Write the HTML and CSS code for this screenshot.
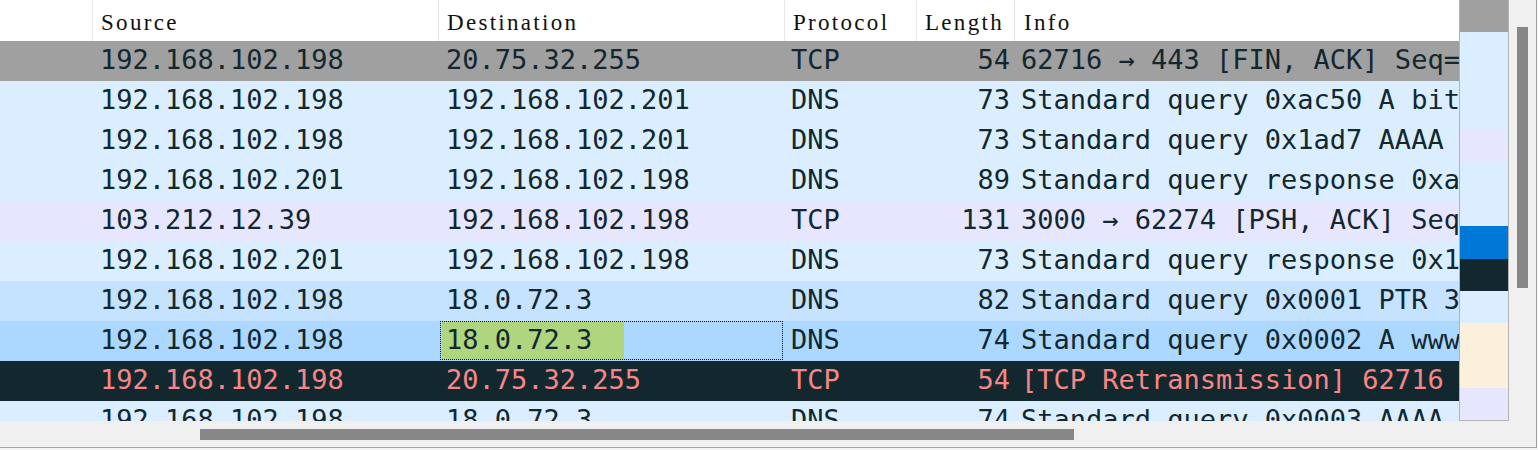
FILE: index.html
```html
<!DOCTYPE html>
<html>
<head>
<meta charset="utf-8">
<link rel="stylesheet" href="styles.css">
</head>
<body>
<div class="frame">
  <div class="top">
    <div class="table">
      <div class="row head">
        <div class="c c0"></div>
        <div class="c c1">Source</div>
        <div class="c c2">Destination</div>
        <div class="c c3">Protocol</div>
        <div class="c c4">Length</div>
        <div class="c c5">Info</div>
      </div>
      <div class="row data fin">
        <div class="c c0"></div><div class="c c1">192.168.102.198</div><div class="c c2">20.75.32.255</div><div class="c c3">TCP</div><div class="c c4">54</div><div class="c c5">62716 → 443 [FIN, ACK] Seq=1 Ack=1 Win=513 Len=0</div>
      </div>
      <div class="row data udp">
        <div class="c c0"></div><div class="c c1">192.168.102.198</div><div class="c c2">192.168.102.201</div><div class="c c3">DNS</div><div class="c c4">73</div><div class="c c5">Standard query 0xac50 A bit.ly</div>
      </div>
      <div class="row data udp">
        <div class="c c0"></div><div class="c c1">192.168.102.198</div><div class="c c2">192.168.102.201</div><div class="c c3">DNS</div><div class="c c4">73</div><div class="c c5">Standard query 0x1ad7 AAAA bit.ly</div>
      </div>
      <div class="row data udp">
        <div class="c c0"></div><div class="c c1">192.168.102.201</div><div class="c c2">192.168.102.198</div><div class="c c3">DNS</div><div class="c c4">89</div><div class="c c5">Standard query response 0xac50 A bit.ly</div>
      </div>
      <div class="row data tcp">
        <div class="c c0"></div><div class="c c1">103.212.12.39</div><div class="c c2">192.168.102.198</div><div class="c c3">TCP</div><div class="c c4">131</div><div class="c c5">3000 → 62274 [PSH, ACK] Seq=1 Ack=1 Win=501 Len=77</div>
      </div>
      <div class="row data udp">
        <div class="c c0"></div><div class="c c1">192.168.102.201</div><div class="c c2">192.168.102.198</div><div class="c c3">DNS</div><div class="c c4">73</div><div class="c c5">Standard query response 0x1ad7 AAAA bit.ly</div>
      </div>
      <div class="row data hover">
        <div class="c c0"></div><div class="c c1">192.168.102.198</div><div class="c c2">18.0.72.3</div><div class="c c3">DNS</div><div class="c c4">82</div><div class="c c5">Standard query 0x0001 PTR 3.72.0.18.in-addr.arpa</div>
      </div>
      <div class="row data sel">
        <div class="c c0"></div><div class="c c1">192.168.102.198</div><div class="c c2 focus"><span class="hit">18.0.72.3</span></div><div class="c c3">DNS</div><div class="c c4">74</div><div class="c c5">Standard query 0x0002 A www.example.com</div>
      </div>
      <div class="row data bad">
        <div class="c c0"></div><div class="c c1">192.168.102.198</div><div class="c c2">20.75.32.255</div><div class="c c3">TCP</div><div class="c c4">54</div><div class="c c5">[TCP Retransmission] 62716 → 443 [FIN, ACK]</div>
      </div>
      <div class="row data udp">
        <div class="c c0"></div><div class="c c1">192.168.102.198</div><div class="c c2">18.0.72.3</div><div class="c c3">DNS</div><div class="c c4">74</div><div class="c c5">Standard query 0x0003 AAAA www.example.com</div>
      </div>
    </div>
    <div class="minimap">
      <div class="m gray"></div>
      <div class="m lb"></div>
      <div class="m lb"></div>
      <div class="m lb"></div>
      <div class="m lav"></div>
      <div class="m lb"></div>
      <div class="m lb"></div>
      <div class="m blue"></div>
      <div class="m dark"></div>
      <div class="m lb"></div>
      <div class="m beige"></div>
      <div class="m beige"></div>
      <div class="m lav"></div>
    </div>
    <div class="vscroll"><div class="vthumb"></div></div>
  </div>
  <div class="hscroll"><div class="hthumb"></div></div>
</div>
</body>
</html>
```
FILE: styles.css
```css
html, body {
  margin: 0;
  padding: 0;
}
body {
  background: #f4f4f4;
  width: 1538px;
  height: 450px;
  overflow: hidden;
}
.frame {
  width: 1536px;
  height: 447px;
  border-right: 1px solid #a3a3a3;
  border-bottom: 1px solid #a3a3a3;
  display: flex;
  flex-direction: column;
  background: #f0f0f0;
}
.top {
  display: flex;
  height: 421px;
}
.table {
  width: 1459px;
  height: 421px;
  overflow: hidden;
  background: #ffffff;
  display: flex;
  flex-direction: column;
}
.row {
  display: grid;
  grid-template-columns: 93px 346px 346px 132px 98px 444px;
  flex: none;
}
.head {
  height: 41px;
  background: #ffffff;
  font-family: "Liberation Serif", serif;
  font-size: 23px;
  letter-spacing: 2.3px;
  color: #111111;
}
.head .c {
  border-right: 1px solid #e6e6e6;
  padding: 11px 0 0 8px;
  line-height: 1;
  box-sizing: border-box;
  height: 41px;
  white-space: nowrap;
  overflow: hidden;
}
.head .c5 {
  border-right: none;
  padding-left: 9px;
}
.data {
  height: 40px;
  font-family: "DejaVu Sans Mono", monospace;
  font-size: 27px;
  color: #12272e;
}
.data .c {
  box-sizing: border-box;
  height: 40px;
  line-height: 1;
  padding: 5px 0 0 7px;
  white-space: nowrap;
  overflow: hidden;
}
.data .c3 {
  padding-left: 6px;
}
.data .c4 {
  text-align: right;
  padding-left: 0;
  padding-right: 5px;
}
.data .c5 {
  padding-left: 6px;
}
.fin { background: #a0a0a0; }
.udp { background: #daeeff; }
.tcp { background: #e7e6ff; }
.hover { background: #c5e2ff; }
.sel { background: #acd7ff; }
.bad { background: #12272e; color: #f78787; }

.data .focus {
  border: 1px dotted #000000;
  margin: 0 2px 1px 1px;
  height: 39px;
  padding: 0 0 0 1px;
}
.hit {
  display: block;
  width: 182px;
  height: 37px;
  background: #b0d57f;
  padding-top: 4px;
  padding-left: 4px;
  box-sizing: border-box;
}

.minimap {
  width: 48px;
  height: 420px;
  border-left: 1px solid #b4b4b4;
  border-right: 1px solid #b4b4b4;
  border-bottom: 1px solid #b4b4b4;
  display: flex;
  flex-direction: column;
  flex: none;
}
.m { flex: 1; }
.m.gray { background: #a0a0a0; }
.m.lb { background: #daeeff; }
.m.lav { background: #e7e6ff; }
.m.blue { background: #0078d7; }
.m.dark { background: #12272e; }
.m.beige { background: #faf0dc; }

.vscroll {
  width: 27px;
  flex: none;
  background: #f0f0f0;
  padding: 27px 0 0 8px;
  box-sizing: border-box;
}
.vthumb {
  width: 11px;
  height: 261px;
  background: #878787;
}
.hscroll {
  height: 26px;
  background: #f0f0f0;
  padding: 8px 0 0 200px;
  box-sizing: border-box;
}
.hthumb {
  width: 874px;
  height: 11px;
  background: #878787;
}
```
